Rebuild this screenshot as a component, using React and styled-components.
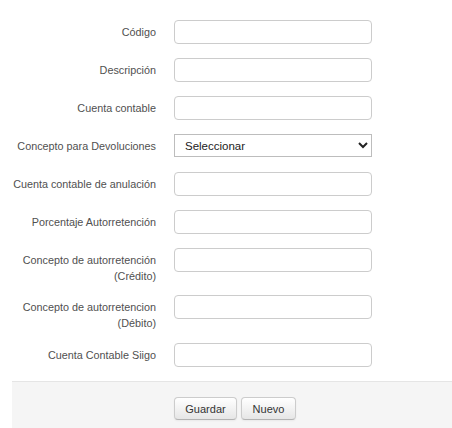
import React from "react";
import styled, { createGlobalStyle } from "styled-components";

const Global = createGlobalStyle`
  html, body { margin: 0; padding: 0; background: #fff; }
  body { font-family: "Liberation Sans", Arial, sans-serif; }
`;

const Page = styled.div`
  padding: 20px 0 0 12px;
  height: 428px;
  box-sizing: border-box;
  overflow: hidden;
  display: flex;
  flex-direction: column;
`;

const Form = styled.form`
  display: flex;
  flex-direction: column;
  flex: 1;
`;

const Row = styled.div`
  display: grid;
  grid-template-columns: 144px 198px;
  column-gap: 18px;
  align-items: start;
  margin-bottom: ${(p) => (p.$tight ? "11px" : "12px")};
`;

const Label = styled.label`
  font-size: 10.8px;
  line-height: 16px;
  color: #505050;
  text-align: right;
  padding-top: 4px;
  white-space: nowrap;
`;

const Input = styled.input`
  box-sizing: border-box;
  width: 198px;
  height: 24px;
  margin: 0 0 2px 0;
  border: 1px solid #cccccc;
  border-radius: 4px;
  background: #fff;
  padding: 2px 6px;
  font-family: inherit;
  font-size: 11px;
  color: #555;
  outline: none;
`;

const Select = styled.select`
  box-sizing: border-box;
  width: 198px;
  height: 23px;
  margin: 0 0 3px 0;
  border: 1px solid #bdbdbd;
  border-radius: 0;
  background: #fff;
  padding: 0 6px 0 6px;
  font-family: "Liberation Sans", Arial, sans-serif;
  font-size: 11.5px;
  color: #222;
  outline: none;
`;

const Footer = styled.div`
  flex: 1;
  border-top: 1px solid #e5e5e5;
  background: #f5f5f5;
  padding: 15px 0 0 162px;
  display: flex;
  align-items: flex-start;
  gap: 4px;
`;

const Button = styled.button`
  box-sizing: border-box;
  height: 23px;
  width: ${(p) => p.$w}px;
  padding: 0;
  font-family: "Liberation Sans", Arial, sans-serif;
  font-size: 11px;
  color: #333;
  background: linear-gradient(to bottom, #ffffff, #e6e6e6);
  border: 1px solid #cccccc;
  border-bottom-color: #b3b3b3;
  border-radius: 4px;
  box-shadow: inset 0 1px 0 rgba(255,255,255,.2), 0 1px 2px rgba(0,0,0,.05);
  cursor: pointer;
`;

const fields = [
  { label: "Código" },
  { label: "Descripción" },
  { label: "Cuenta contable" },
  { label: "Concepto para Devoluciones", select: true },
  { label: "Cuenta contable de anulación" },
  { label: "Porcentaje Autorretención" },
  { label: <>Concepto de autorretención<br />(Crédito)</>, tight: true },
  { label: <>Concepto de autorretencion<br />(Débito)</> },
  { label: "Cuenta Contable Siigo" },
];

export default function App() {
  return (
    <>
      <Global />
      <Page>
        <Form onSubmit={(e) => e.preventDefault()}>
          {fields.map((f, i) => (
            <Row key={i} $tight={f.tight}>
              <Label>{f.label}</Label>
              {f.select ? (
                <Select defaultValue="">
                  <option value="">Seleccionar</option>
                </Select>
              ) : (
                <Input type="text" />
              )}
            </Row>
          ))}
          <Footer>
            <Button type="button" $w={63}>Guardar</Button>
            <Button type="button" $w={55}>Nuevo</Button>
          </Footer>
        </Form>
      </Page>
    </>
  );
}
